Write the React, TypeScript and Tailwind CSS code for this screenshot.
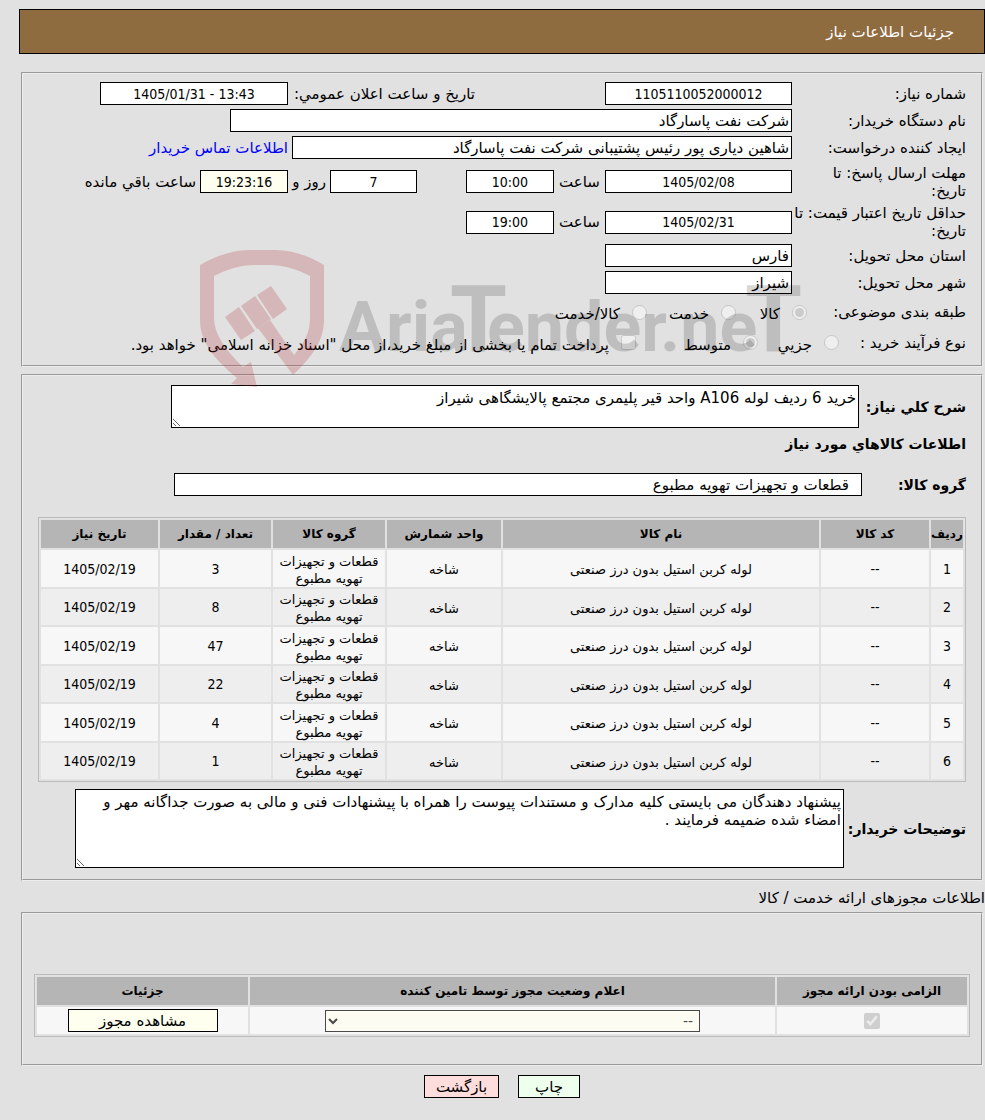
import type {ReactNode} from "react";

type Item = {
  row: number;
  count: string;
};

const items: Item[] = [
  {row: 1, count: "3"},
  {row: 2, count: "8"},
  {row: 3, count: "47"},
  {row: 4, count: "22"},
  {row: 5, count: "4"},
  {row: 6, count: "1"}
];

const digits = "text-center text-sm [font-family:'DejaVu_Sans_Condensed','DejaVu_Sans',sans-serif]";
const headCell = "h-7 whitespace-nowrap bg-[#b5b5b5] p-0 text-center text-xs font-bold";
const bodyCell = "px-0 pb-0 pt-0.5 text-center text-[13px] leading-[17px]";
const numberCell = `p-0 leading-[18px] ${digits}`;

function Panel({children, className}: {children: ReactNode; className: string}) {
  return (
    <section className={`mx-0.5 border-2 border-[#ededed] [border-style:groove] ${className}`}>
      {children}
    </section>
  );
}

function Field({id, value, className}: {id: string; value: string; className: string}) {
  return (
    <input
      id={id}
      type="text"
      readOnly
      defaultValue={value}
      className={`h-[23px] shrink-0 border border-black px-0.5 ${className}`}
    />
  );
}

function Label({htmlFor, children}: {htmlFor: string; children: ReactNode}) {
  return (
    <label htmlFor={htmlFor} className="w-[174px] shrink-0 leading-[18px]">
      {children}
    </label>
  );
}

function Choice({
  type,
  name,
  label,
  checked,
  className
}: {
  type: "radio" | "checkbox";
  name: string;
  label: string;
  checked?: boolean;
  className: string;
}) {
  return (
    <label className={`flex shrink-0 items-center gap-3 whitespace-nowrap ${className}`}>
      <input type={type} name={name} disabled defaultChecked={checked} className="h-[15px] w-[15px] shrink-0" />
      <span className="pt-1">{label}</span>
    </label>
  );
}

function Watermark() {
  return (
    <svg
      className="pointer-events-none absolute left-[171px] top-[168px]"
      width="640"
      height="150"
      viewBox="190 240 640 150"
      aria-hidden="true"
    >
      <g fill="#b3262e" opacity="0.22">
        <path d="M200 265C218 255 234 250 248 250H276C291 250 307 255 324 265V320C324 340 313 356 293 375L258 328 270 320 294 355C305 342 310 332 310 318V276C296 269 284 265 270 265H254C240 265 228 269 214 276V318C214 334 226 351 243 367L251 362 257 387 231 384 237 378C213 358 200 341 200 320Z" />
        <path d="M225 317 239 307 255 331 241 340ZM241 306 255 296 271 319 257 329ZM257 295 271 286 287 309 273 319Z" />
      </g>
      {/* lower case letters tuck in under the arms of the two tall T's */}
      <g opacity="0.15" className="[direction:ltr] [font-family:Roboto,sans-serif]" fontWeight="bold" fontSize="70">
        <text x="339" y="351">
          Aria
        </text>
        <text x="450" y="351" fontSize="92">
          T
        </text>
        <text x="487" y="351">
          ender
        </text>
        <text x="660" y="351">
          .ne
        </text>
        <text x="745" y="351" fontSize="92">
          T
        </text>
      </g>
    </svg>
  );
}

export default function App() {
  return (
    <div
      dir="rtl"
      className="min-h-screen bg-[#e1e1e1] pb-5 pe-[19px] pt-[9px] text-[15px] leading-[18px] text-black [font-family:'DejaVu_Sans',sans-serif]"
    >
      <h1 className="flex h-[45px] items-center border border-black bg-[#8f6b40] ps-[30px] text-white">
        جزئیات اطلاعات نیاز
      </h1>

      <main className="relative mt-[18px]">
        <Panel className="px-[15px] pb-2 pt-1.5">
          <div className="flex h-[27px] items-center">
            <Label htmlFor="need-no">شماره نیاز:</Label>
            <Field id="need-no" value="1105110052000012" className={`w-[187px] bg-white ${digits}`} />
            <label htmlFor="announce" className="me-[5px] ms-[130px] w-[182px] shrink-0 whitespace-nowrap">
              تاریخ و ساعت اعلان عمومي:
            </label>
            <Field id="announce" value="1405/01/31 - 13:43" className={`w-[188px] bg-white [direction:ltr] ${digits}`} />
          </div>
          <div className="flex h-[27px] items-center">
            <Label htmlFor="buyer">نام دستگاه خریدار:</Label>
            <Field id="buyer" value="شرکت نفت پاسارگاد" className="w-[562px] bg-white" />
          </div>
          <div className="flex h-[27px] items-center">
            <Label htmlFor="creator">ایجاد کننده درخواست:</Label>
            <Field
              id="creator"
              value="شاهین دیاری پور رئیس پشتیبانی شرکت نفت پاسارگاد"
              className="w-[500px] bg-white"
            />
            <a href="#contact" className="ms-1 whitespace-nowrap text-[#0000ff]">
              اطلاعات تماس خریدار
            </a>
          </div>
          <div className="flex h-[41px] items-center">
            <Label htmlFor="deadline">
              مهلت ارسال پاسخ: تا
              <br />
              تاریخ:
            </Label>
            <Field id="deadline" value="1405/02/08" className={`w-[187px] bg-white ${digits}`} />
            <label htmlFor="deadline-time" className="w-[51px] shrink-0 text-center">
              ساعت
            </label>
            <Field id="deadline-time" value="10:00" className={`w-[88px] bg-white ${digits}`} />
            <Field id="days-left" value="7" className={`ms-[49px] w-[87px] bg-white ${digits}`} />
            <label htmlFor="days-left" className="w-[42px] shrink-0 ps-1">
              روز و
            </label>
            <Field id="time-left" value="19:23:16" className={`w-[88px] bg-[#fffff0] ${digits}`} />
            <label htmlFor="time-left" className="ms-1 whitespace-nowrap">
              ساعت باقي مانده
            </label>
          </div>
          <div className="flex h-10 items-center">
            <Label htmlFor="valid-date">
              <span className="whitespace-nowrap">حداقل تاریخ اعتبار قیمت: تا</span>
              <br />
              تاریخ:
            </Label>
            <Field id="valid-date" value="1405/02/31" className={`w-[187px] bg-white ${digits}`} />
            <label htmlFor="valid-time" className="w-[51px] shrink-0 text-center">
              ساعت
            </label>
            <Field id="valid-time" value="19:00" className={`w-[88px] bg-white ${digits}`} />
          </div>
          <div className="flex h-[27px] items-center">
            <Label htmlFor="province">استان محل تحویل:</Label>
            <Field id="province" value="فارس" className="w-[187px] bg-white" />
          </div>
          <div className="flex h-[27px] items-center">
            <Label htmlFor="city">شهر محل تحویل:</Label>
            <Field id="city" value="شیراز" className="w-[187px] bg-white" />
          </div>
          <div className="flex h-8 items-center" role="group" aria-label="طبقه بندی موضوعی">
            <span className="w-[159px] shrink-0">طبقه بندی موضوعی:</span>
            <Choice type="radio" name="category" label="کالا" checked className="w-[71px]" />
            <Choice type="radio" name="category" label="خدمت" className="w-[89px]" />
            <Choice type="radio" name="category" label="کالا/خدمت" className="" />
          </div>
          <div className="flex h-[29px] items-center" role="group" aria-label="نوع فرآیند خرید">
            <span className="w-[127px] shrink-0">نوع فرآیند خرید :</span>
            <Choice type="radio" name="process" label="جزیي" className="w-[81px]" />
            <Choice type="radio" name="process" label="متوسط" checked className="w-[122px]" />
            <Choice
              type="checkbox"
              name="treasury"
              label={'پرداخت تمام یا بخشی از مبلغ خرید،از محل "اسناد خزانه اسلامی" خواهد بود.'}
              className=""
            />
          </div>
        </Panel>

        <Panel className="mt-[7px] px-[15px] pb-[11px] pt-[9px]">
          <div className="flex items-center">
            <label htmlFor="summary" className="w-[107px] shrink-0 text-sm font-bold">
              شرح کلي نیاز:
            </label>
            <textarea
              id="summary"
              readOnly
              defaultValue="خرید 6 ردیف لوله A106 واحد قیر پلیمری مجتمع پالایشگاهی شیراز"
              className="h-[43px] w-[688px] resize overflow-hidden border border-black bg-white px-0.5 py-[3px] leading-[18px]"
            />
          </div>
          <h2 className="mt-[7px] text-sm leading-[18px] font-bold">اطلاعات کالاهاي مورد نیاز</h2>
          <div className="mt-5 flex items-center">
            <label htmlFor="group" className="w-[104px] shrink-0 text-sm font-bold">
              گروه کالا:
            </label>
            <Field id="group" value="قطعات و تجهیزات تهویه مطبوع" className="w-[688px] bg-white ps-3" />
          </div>

          <table className="mt-[21px] w-full table-fixed border-separate border-spacing-0.5 border border-[#bbbbbb]">
            <thead>
              <tr>
                <th className={`w-8 ${headCell}`}>ردیف</th>
                <th className={`w-[108px] ${headCell}`}>کد کالا</th>
                <th className={headCell}>نام کالا</th>
                <th className={`w-[114px] ${headCell}`}>واحد شمارش</th>
                <th className={`w-28 ${headCell}`}>گروه کالا</th>
                <th className={`w-[111px] ${headCell}`}>تعداد / مقدار</th>
                <th className={`w-[117px] ${headCell}`}>تاریخ نیاز</th>
              </tr>
            </thead>
            <tbody>
              {items.map((item) => (
                <tr key={item.row} className="h-9 bg-[#eeeeee] odd:h-[37px] odd:bg-[#f7f7f7]">
                  <td className={numberCell}>{item.row}</td>
                  <td className={numberCell}>--</td>
                  <td className={bodyCell}>لوله کربن استیل بدون درز صنعتی</td>
                  <td className={bodyCell}>شاخه</td>
                  <td className={bodyCell}>
                    قطعات و تجهیزات
                    <br />
                    تهویه مطبوع
                  </td>
                  <td className={numberCell}>{item.count}</td>
                  <td className={numberCell}>1405/02/19</td>
                </tr>
              ))}
            </tbody>
          </table>

          <div className="mt-[7px] flex items-center">
            <label htmlFor="notes" className="w-[122px] shrink-0 text-sm font-bold">
              توضیحات خریدار:
            </label>
            <textarea
              id="notes"
              readOnly
              defaultValue={
                "پیشنهاد دهندگان می بایستی کلیه مدارک و مستندات پیوست را همراه با پیشنهادات فنی و مالی به صورت جداگانه مهر و امضاء شده ضمیمه فرمایند ."
              }
              className="h-[79px] w-[769px] resize border border-black bg-white px-0.5 py-[3px] leading-[18px]"
            />
          </div>
        </Panel>

        <h2 className="mb-[5px] mt-2">اطلاعات مجوزهای ارائه خدمت / کالا</h2>

        <Panel className="px-[11px] pb-[27px] pt-[60px]">
          <table className="w-full table-fixed border-separate border-spacing-0.5 border border-[#bbbbbb]">
            <thead>
              <tr>
                <th className={`w-[190px] ${headCell}`}>الزامی بودن ارائه مجوز</th>
                <th className={headCell}>اعلام وضعیت مجوز توسط تامین کننده</th>
                <th className={`w-[211px] ${headCell}`}>جزئیات</th>
              </tr>
            </thead>
            <tbody>
              <tr className="h-[27px] bg-[#f7f7f7]">
                <td className="p-0 text-center">
                  <input
                    type="checkbox"
                    disabled
                    defaultChecked
                    aria-label="الزامی بودن ارائه مجوز"
                    className="mx-auto block h-4 w-4"
                  />
                </td>
                <td className="p-0">
                  <select
                    disabled
                    aria-label="اعلام وضعیت مجوز"
                    className="mx-auto block h-[22px] w-[375px] border border-black bg-[#fffff0] px-0.5 text-sm opacity-70"
                  >
                    <option>--</option>
                  </select>
                </td>
                <td className="p-0">
                  <button type="button" className="mx-auto block h-[23px] w-[150px] border border-black bg-[#fffff0]">
                    مشاهده مجوز
                  </button>
                </td>
              </tr>
            </tbody>
          </table>
        </Panel>

        <Watermark />
      </main>

      <div className="mt-[9px] flex justify-center gap-[19px]">
        <button type="button" className="h-[23px] w-[62px] border border-black bg-[#eeffee]">
          چاپ
        </button>
        <button type="button" className="h-[23px] w-[75px] border border-black bg-[#ffdddd]">
          بازگشت
        </button>
      </div>
    </div>
  );
}
